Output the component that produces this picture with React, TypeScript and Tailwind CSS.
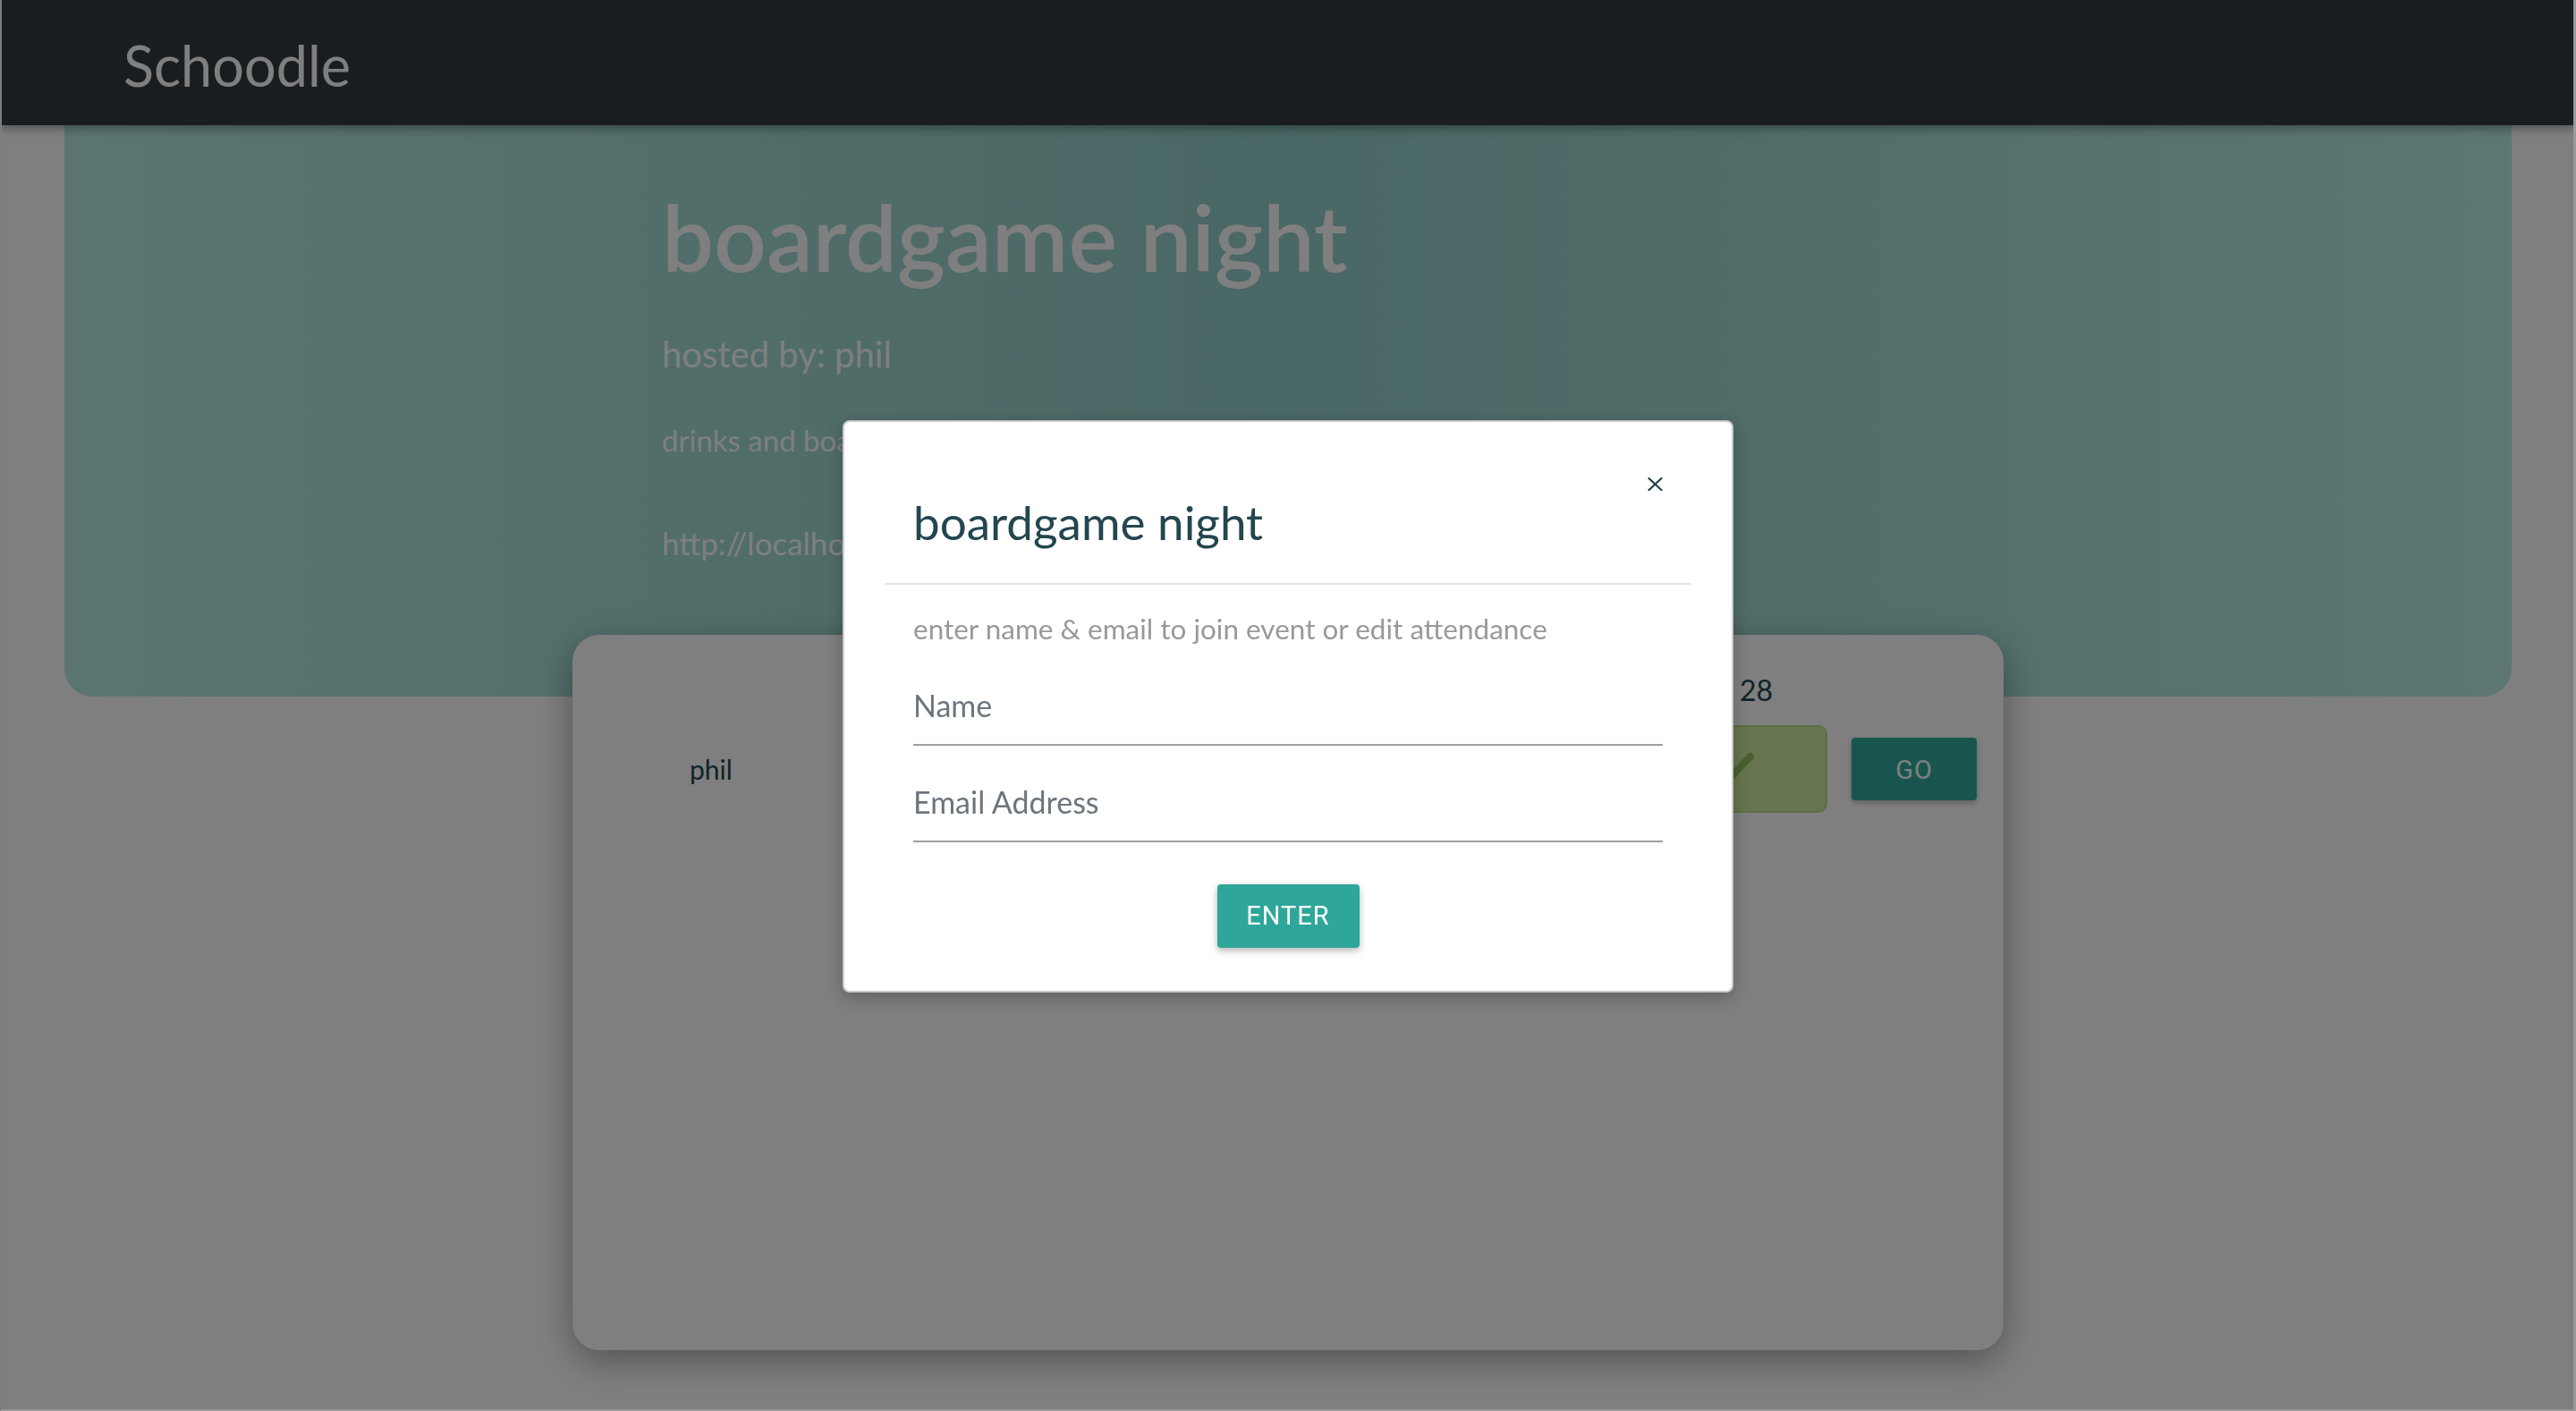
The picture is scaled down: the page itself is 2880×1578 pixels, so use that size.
import React from "react";

const CloseIcon = () => (
  <svg width="17" height="15" viewBox="0 0 17 15" fill="none">
    <path d="M1.5 1L15.5 14M15.5 1L1.5 14" stroke="#1f3d47" strokeWidth="2.2" strokeLinecap="round" />
  </svg>
);

const CheckIcon = () => (
  <svg width="48" height="38" viewBox="0 0 48 38" fill="none">
    <path d="M5 20L17 32L43 5" stroke="#93c35c" strokeWidth="8" strokeLinecap="round" strokeLinejoin="round" />
  </svg>
);

const Navbar = () => (
  <nav className="relative z-10 h-[140px] bg-[#343a40] pl-[138px] pt-[35px] shadow-[0_4px_10px_rgba(0,0,0,0.35)]">
    <a className="text-[63px] leading-[76px] text-white">Schoodle</a>
  </nav>
);

const Jumbotron = () => (
  <section className="mx-[72px] h-[639px] rounded-b-[32px] bg-linear-to-r from-[#b6eae2] via-[#93cfca] to-[#b9ede5] pt-[62px]">
    <div className="mx-auto w-[1400px] text-white">
      <h1 className="text-[103px] leading-[124px] font-semibold">boardgame night</h1>
      <p className="mt-[46px] text-[40px] leading-[48px]">hosted by: phil</p>
      <p className="mt-[52px] text-[33px] leading-[40px]">drinks and boardgames</p>
      <p className="mt-[74px] text-[35px] leading-[42px]">http://localhost:3000/event/1</p>
    </div>
  </section>
);

const EventCard = () => (
  <main className="relative z-[5] mx-auto -mt-[69px] h-[800px] w-[1600px] rounded-[30px] bg-white pt-[43px] shadow-[0_12px_40px_rgba(0,0,0,0.35)]">
    <div className="flex justify-end pr-[258px] text-[32px] leading-[38px] text-[#234650]">
      <span className="mr-[16px]">Dec</span>
      <span>28</span>
    </div>
    <div className="mt-[20px] flex items-center pl-[131px] pr-[30px]">
      <div className="flex-1 text-[30px] leading-[36px] text-[#234650]">phil</div>
      <div className="flex h-[98px] w-[210px] items-center justify-center rounded-[10px] border-2 border-[#bcdc90] bg-[#ccea9e]">
        <CheckIcon />
      </div>
      <button className="ml-[27px] h-[70px] w-[140px] rounded-[4px] bg-[#30aa9e] pt-[4px] font-['Roboto',sans-serif] text-[29px] tracking-[1px] text-white shadow-[0_3px_6px_rgba(0,0,0,0.25)]">
        GO
      </button>
    </div>
  </main>
);

const JoinModal = () => (
  <div className="fixed inset-0 z-50 flex justify-center pt-[470px]">
    <div className="h-fit w-[996px] rounded-[8px] border-2 border-black/20 bg-white px-[46px] shadow-[0_6px_20px_rgba(0,0,0,0.25)]">
      <div className="flex items-start justify-between border-b-2 border-[#dee2e6] px-[31px]">
        <h5 className="mt-[80px] mb-[36px] text-[53px] leading-[64px] text-[#234650]">boardgame night</h5>
        <button className="mt-[62px]">
          <CloseIcon />
        </button>
      </div>
      <div className="flex flex-col px-[31px] pt-[30px] pb-[48px]">
        <p className="text-[31.5px] leading-[38px] text-[#999999]">enter name &amp; email to join event or edit attendance</p>
        <input
          placeholder="Name"
          className="mt-[46px] h-[66px] w-full border-b-2 border-[#9e9e9e] bg-transparent pb-[24px] text-[34px] leading-[40px] text-[#495057] outline-none placeholder:text-[#6c757d]"
        />
        <input
          placeholder="Email Address"
          className="mt-[42px] h-[66px] w-full border-b-2 border-[#9e9e9e] bg-transparent pb-[24px] text-[34px] leading-[40px] text-[#495057] outline-none placeholder:text-[#6c757d]"
        />
        <button className="mx-auto mt-[47px] h-[71px] w-[159px] rounded-[4px] bg-[#2ea69a] font-['Roboto',sans-serif] text-[29px] tracking-[1px] text-white shadow-[0_3px_6px_rgba(0,0,0,0.2),0_3px_12px_rgba(0,0,0,0.12)]">
          ENTER
        </button>
      </div>
    </div>
  </div>
);

export default function App() {
  return (
    <div className="relative h-[1578px] overflow-hidden bg-white font-['Lato','Noto_Sans',sans-serif]">
      <Navbar />
      <Jumbotron />
      <EventCard />
      <div className="fixed inset-0 z-40 bg-black/50" />
      <JoinModal />
      <div className="pointer-events-none fixed inset-0 z-[60] border-b-2 border-l-2 border-r-[3px] border-b-[#999999] border-l-[#7d7d7d] border-r-[#999999]" />
    </div>
  );
}
